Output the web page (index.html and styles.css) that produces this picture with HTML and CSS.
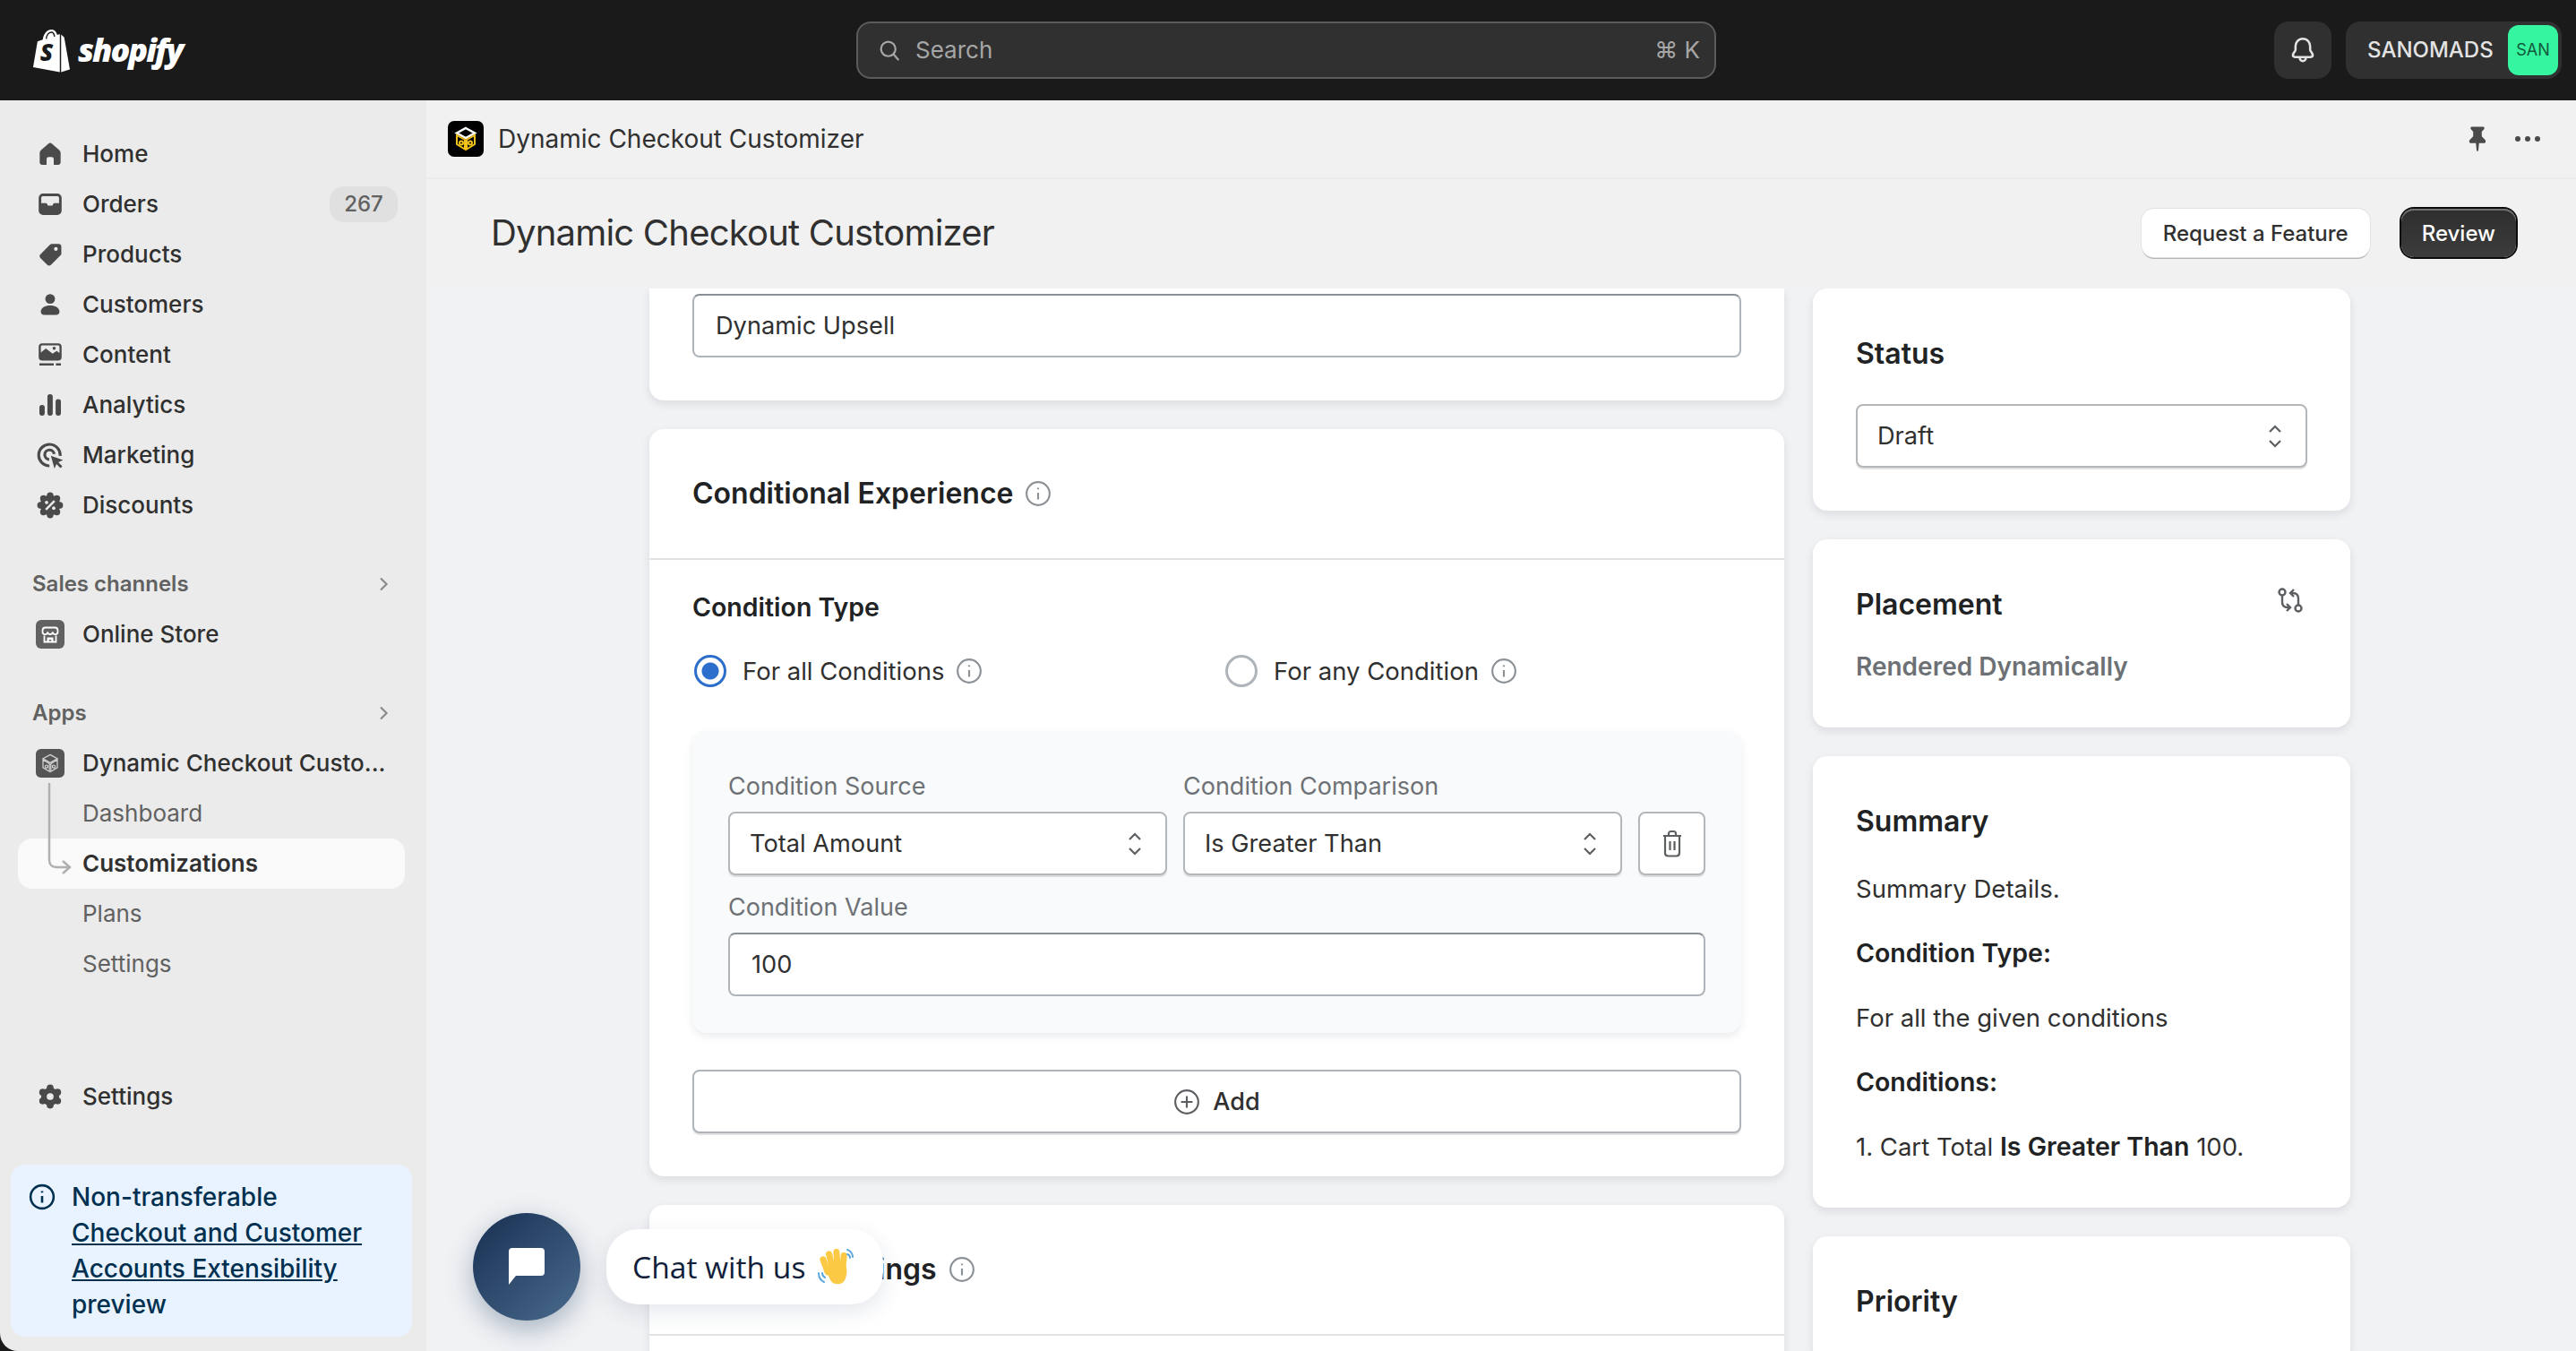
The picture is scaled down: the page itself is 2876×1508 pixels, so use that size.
FILE: index.html
```html
<!DOCTYPE html>
<html>
<head>
    <meta charset="utf-8">
    <title>Dynamic Checkout Customizer</title>
    <link rel="stylesheet" href="styles.css">
</head>
<body>
<header class="topbar">
    <div class="brand">
        <svg class="brand-bag" viewBox="0 0 44 50">
            <path fill="#fff" d="M1 44 6 14.500 12 12.500C13 5.500 17 1 22 1 25.500 1 27.500 3.500 28.500 7L31.500 6V49.500Z"/>
            <path fill="#fff" d="M33 6.500 36.500 10 43 46.500 33 49.500Z"/>
            <path fill="none" stroke="#1a1a1a" stroke-width="1.500" d="M16 11.500C16.500 7 19 4 22 4 24 4 25 6 25.500 9"/>
            <text class="brand-s" x="9" y="37">S</text>
        </svg>
        <span class="brand-name">shopify</span>
    </div>
    <div class="search">
        <svg class="icon-search" viewBox="0 0 20 20"><circle cx="9" cy="9" r="6.200"/><path d="m13.500 13.500 4 4.500"/></svg>
        <span class="search-text">Search</span>
        <span class="search-key">⌘ K</span>
    </div>
    <div class="top-actions">
        <div class="bell-btn">
            <svg class="icon-bell" viewBox="0 0 20 20"><path d="M10 2.500c-3 0-4.800 2.300-4.800 5v2.200c0 1-1.700 2.200-1.700 3.600 0 .8.600 1.200 1.400 1.200h10.200c.8 0 1.400-.4 1.400-1.200 0-1.400-1.700-2.600-1.700-3.600V7.500c0-2.700-1.800-5-4.800-5Z"/><path d="M8 15c0 1.300.9 2.200 2 2.200s2-.9 2-2.200"/></svg>
        </div>
        <div class="account">
            <span class="account-name">SANOMADS</span>
            <span class="account-avatar">SAN</span>
        </div>
    </div>
</header>

<div class="shell">
    <aside class="sidebar">
        <nav class="nav-group">
            <a class="nav-item">
                <svg class="nav-icon" viewBox="0 0 20 20"><path d="M8.700 2.800a2 2 0 0 1 2.600 0l5.200 4.600a2.500 2.500 0 0 1 .8 1.900v6.200a2 2 0 0 1-2 2h-2.800v-4a1.500 1.500 0 0 0-1.500-1.500h-2a1.500 1.500 0 0 0-1.500 1.500v4H4.700a2 2 0 0 1-2-2V9.300a2.500 2.500 0 0 1 .8-1.900Z"/></svg>
                Home
            </a>
            <a class="nav-item">
                <svg class="nav-icon" viewBox="0 0 20 20"><path fill-rule="evenodd" d="M5 2.500h10a3 3 0 0 1 3 3v9a3 3 0 0 1-3 3H5a3 3 0 0 1-3-3v-9a3 3 0 0 1 3-3ZM3.800 5.500c0-.6.500-1.100 1.100-1.100h10.200c.6 0 1.100.5 1.100 1.100v3.700h-3.100c-.5 0-.9.300-1.100.8l-.4 1h-3.200l-.4-1c-.2-.5-.6-.8-1.100-.8H3.800Z"/></svg>
                Orders
                <span class="nav-badge">267</span>
            </a>
            <a class="nav-item">
                <svg class="nav-icon" viewBox="0 0 20 20"><path fill-rule="evenodd" d="M11.200 2.700h4.600a2 2 0 0 1 2 2v4.600a2 2 0 0 1-.6 1.400l-6.500 6.500a2 2 0 0 1-2.800 0l-4.600-4.600a2 2 0 0 1 0-2.800l6.500-6.500a2 2 0 0 1 1.400-.6Zm2.800 4.800a1.300 1.300 0 1 0 0-2.600 1.300 1.300 0 0 0 0 2.600Z"/></svg>
                Products
            </a>
            <a class="nav-item">
                <svg class="nav-icon" viewBox="0 0 20 20"><circle cx="10" cy="6" r="3.400"/><path d="M3.500 15c0-2.800 3-4.300 6.500-4.300s6.500 1.500 6.500 4.300c0 1.300-1 2.200-2.200 2.200H5.700c-1.200 0-2.200-.9-2.200-2.200Z"/></svg>
                Customers
            </a>
            <a class="nav-item">
                <svg class="nav-icon" viewBox="0 0 20 20"><path fill-rule="evenodd" d="M4.500 2h11A2.500 2.500 0 0 1 18 4.500v7a2.500 2.500 0 0 1-2.500 2.500h-11A2.500 2.500 0 0 1 2 11.500v-7A2.500 2.500 0 0 1 4.500 2Zm-1 6.500V4.500c0-.6.400-1 1-1h11c.6 0 1 .4 1 1v4.300l-2-1.500-2.800 1.900L7 5.700Z"/><circle cx="12.800" cy="5.500" r="1.100"/><path d="M2.500 16h10v1.500h-10zM14 16h3.500v1.500H14z"/></svg>
                Content
            </a>
            <a class="nav-item">
                <svg class="nav-icon" viewBox="0 0 20 20"><rect x="2.500" y="10" width="3.700" height="7.500" rx="1.800"/><rect x="8.100" y="2.500" width="3.700" height="15" rx="1.800"/><rect x="13.800" y="6" width="3.700" height="11.500" rx="1.800"/></svg>
                Analytics
            </a>
            <a class="nav-item">
                <svg class="nav-icon" viewBox="0 0 20 20"><path class="nav-stroke" d="M17 10.500A7.500 7.500 0 1 0 9.500 17.500"/><path class="nav-stroke" d="M12.800 9.200A3.300 3.300 0 1 0 9.300 13"/><path d="m10.500 10.500 8.500 3-3.300 1.500 2.800 2.800-1.300 1.300-2.800-2.800-1.400 3Z"/></svg>
                Marketing
            </a>
            <a class="nav-item">
                <svg class="nav-icon" viewBox="0 0 20 20">
                    <circle cx="10" cy="10" r="7"/><circle cx="10" cy="3.300" r="2.300"/><circle cx="10" cy="16.700" r="2.300"/><circle cx="3.300" cy="10" r="2.300"/><circle cx="16.700" cy="10" r="2.300"/><circle cx="5.300" cy="5.300" r="2.300"/><circle cx="14.700" cy="5.300" r="2.300"/><circle cx="5.300" cy="14.700" r="2.300"/><circle cx="14.700" cy="14.700" r="2.300"/>
                    <path class="nav-cut" d="m7 13 6-6"/><circle class="nav-dot" cx="7.500" cy="8" r="1.200"/><circle class="nav-dot" cx="12.500" cy="12" r="1.200"/>
                </svg>
                Discounts
            </a>
        </nav>

        <nav class="nav-group">
            <div class="nav-head">Sales channels
                <svg class="nav-chevron" viewBox="0 0 20 20"><path d="m7.500 4.500 5.500 5.500-5.500 5.500"/></svg>
            </div>
            <a class="nav-item">
                <svg class="nav-icon" viewBox="0 0 32 32"><rect width="32" height="32" rx="6" fill="#616161"/><path class="store-line" d="M7.500 12c0-2 1.200-3.500 3-3.500h11c1.800 0 3 1.500 3 3.500v1.200a2.800 2.800 0 0 1-5.700 0 2.800 2.800 0 0 1-5.600 0 2.800 2.800 0 0 1-5.700 0ZM9.500 17.500v7h13v-7"/><path fill="#fff" d="M12.500 25v-5.500h7V25h-2.300v-3h-2.400v3Z"/></svg>
                Online Store
            </a>
        </nav>

        <nav class="nav-group">
            <div class="nav-head">Apps
                <svg class="nav-chevron" viewBox="0 0 20 20"><path d="m7.500 4.500 5.500 5.500-5.500 5.500"/></svg>
            </div>
            <a class="nav-item">
                <svg class="nav-icon" viewBox="0 0 40 40">
                    <rect width="40" height="40" rx="7" fill="#555"/>
                    <g fill="none" stroke="#d8d8d8" stroke-width="1.500"><path d="m20 8 10 5.500L20 19l-10-5.500Z"/><path d="M10 15v11l9 5.500V20.500ZM30 15v11l-9 5.500V20.500Z"/><circle cx="15" cy="24.500" r="2"/><circle cx="25" cy="24.500" r="2"/></g>
                </svg>
                <span class="nav-clip">Dynamic Checkout Custo...</span>
            </a>
            <div class="sub-list">
                <svg class="tree-line" viewBox="0 0 30 100"><path d="M3 0v86c0 5 3 8 8 8h15M18 87l8 7-8 7"/></svg>
                <a class="nav-item sub">Dashboard</a>
                <a class="nav-item sub active">Customizations</a>
                <a class="nav-item sub">Plans</a>
                <a class="nav-item sub">Settings</a>
            </div>
        </nav>

        <div class="sidebar-foot">
            <a class="nav-item">
                <svg class="nav-icon" viewBox="0 0 20 20">
                    <circle cx="10" cy="10" r="6.300"/><circle cx="10" cy="4" r="2.400"/><circle cx="10" cy="16" r="2.400"/><circle cx="4.800" cy="7" r="2.400"/><circle cx="15.200" cy="7" r="2.400"/><circle cx="4.800" cy="13" r="2.400"/><circle cx="15.200" cy="13" r="2.400"/>
                    <circle class="nav-dot" cx="10" cy="10" r="2.400"/>
                </svg>
                Settings
            </a>
            <div class="banner">
                <svg class="banner-icon" viewBox="0 0 28 28"><circle cx="14" cy="14" r="12"/><path d="M14 13v7M14 8v1.500"/></svg>
                <div class="banner-text">Non-transferable <a class="banner-link">Checkout and Customer Accounts Extensibility</a> preview</div>
            </div>
        </div>
    </aside>

    <main class="main">
        <div class="app-bar">
            <svg class="app-icon" viewBox="0 0 40 40">
                <rect width="40" height="40" rx="7" fill="#000"/>
                <path d="m20 8 10 5.500L20 19l-10-5.500Z" fill="#000" stroke="#fff" stroke-width="2.500"/>
                <g fill="none" stroke="#f2c21b" stroke-width="2"><path d="M10 16v10l9 5.500V21ZM30 16v10l-9 5.500V21Z"/><circle cx="15" cy="24.500" r="2"/><circle cx="25" cy="24.500" r="2"/></g>
            </svg>
            <span class="app-name">Dynamic Checkout Customizer</span>
            <div class="app-tools">
                <svg class="icon-pin" viewBox="0 0 20 20"><path d="M6 1.500h8c.8 0 1.200 1.400.4 2L13 5v3.300l2.300 2.300c.8.800.4 2.400-.8 2.400H11.100l-.5 5.200c-.1.500-1 .5-1.200 0L8.900 13H5.500c-1.200 0-1.600-1.600-.8-2.400L7 8.300V5L5.600 3.500c-.8-.6-.4-2 .4-2Z"/></svg>
                <svg class="icon-dots" viewBox="0 0 28 6"><circle cx="3" cy="3" r="3"/><circle cx="14" cy="3" r="3"/><circle cx="25" cy="3" r="3"/></svg>
            </div>
        </div>

        <div class="page-head">
            <h1 class="page-title">Dynamic Checkout Customizer</h1>
            <div class="page-actions">
                <button class="btn">Request a Feature</button>
                <button class="btn btn-dark">Review</button>
            </div>
        </div>

        <div class="scroller">
            <div class="col-left">
                <section class="card card-cut">
                    <div class="field">Dynamic Upsell</div>
                </section>

                <section class="card">
                    <div class="card-head">
                        <h2 class="card-title">Conditional Experience</h2>
                        <svg class="info" viewBox="0 0 28 28"><circle cx="14" cy="14" r="12"/><path d="M14 13v7M14 8v1.500"/></svg>
                    </div>
                    <div class="card-body">
                        <h3 class="sub-title">Condition Type</h3>
                        <div class="radio-row">
                            <label class="radio-opt">
                                <span class="radio on"></span>For all Conditions
                                <svg class="info" viewBox="0 0 28 28"><circle cx="14" cy="14" r="12"/><path d="M14 13v7M14 8v1.500"/></svg>
                            </label>
                            <label class="radio-opt">
                                <span class="radio"></span>For any Condition
                                <svg class="info" viewBox="0 0 28 28"><circle cx="14" cy="14" r="12"/><path d="M14 13v7M14 8v1.500"/></svg>
                            </label>
                        </div>
                        <div class="rule">
                            <div class="rule-row">
                                <div class="rule-col">
                                    <div class="field-label">Condition Source</div>
                                    <div class="field select">Total Amount
                                        <svg class="updown" viewBox="0 0 20 28"><path d="m4 9 6-6 6 6M4 19l6 6 6-6"/></svg>
                                    </div>
                                </div>
                                <div class="rule-col">
                                    <div class="field-label">Condition Comparison</div>
                                    <div class="field select">Is Greater Than
                                        <svg class="updown" viewBox="0 0 20 28"><path d="m4 9 6-6 6 6M4 19l6 6 6-6"/></svg>
                                    </div>
                                </div>
                                <button class="trash-btn">
                                    <svg class="icon-trash" viewBox="0 0 24 32"><path d="M2 7h20M8 7V4.500C8 3 9 2 10.500 2h3C15 2 16 3 16 4.500V7M4 7v19c0 2 1.500 3.500 3.500 3.500h9c2 0 3.500-1.500 3.500-3.500V7M9.500 13v10M14.500 13v10"/></svg>
                                </button>
                            </div>
                            <div class="field-label">Condition Value</div>
                            <div class="field">100</div>
                        </div>
                        <button class="add-btn">
                            <svg class="icon-add" viewBox="0 0 28 28"><circle cx="14" cy="14" r="12"/><path d="M14 8v12M8 14h12"/></svg>
                            Add
                        </button>
                    </div>
                </section>

                <section class="card">
                    <div class="card-head">
                        <h2 class="card-title">Discount Settings</h2>
                        <svg class="info" viewBox="0 0 28 28"><circle cx="14" cy="14" r="12"/><path d="M14 13v7M14 8v1.500"/></svg>
                    </div>
                    <div class="card-body"></div>
                </section>
            </div>

            <div class="col-right">
                <section class="card card-side">
                    <h2 class="card-title">Status</h2>
                    <div class="field select field-status">Draft
                        <svg class="updown" viewBox="0 0 20 28"><path d="m4 9 6-6 6 6M4 19l6 6 6-6"/></svg>
                    </div>
                </section>
                <section class="card card-side">
                    <div class="side-head">
                        <h2 class="card-title">Placement</h2>
                        <svg class="icon-swap" viewBox="0 0 30 30"><circle cx="6" cy="6" r="3.500"/><circle cx="24" cy="24" r="3.500"/><path d="M6 10v7c0 4 2 6 6 6h3M11 19l4 4-4 4M24 20v-7c0-4-2-6-6-6h-3M19 11l-4-4 4-4"/></svg>
                    </div>
                    <p class="muted">Rendered Dynamically</p>
                </section>
                <section class="card card-side">
                    <h2 class="card-title">Summary</h2>
                    <p class="summary-line first">Summary Details.</p>
                    <p class="summary-line"><b>Condition Type:</b></p>
                    <p class="summary-line">For all the given conditions</p>
                    <p class="summary-line"><b>Conditions:</b></p>
                    <p class="summary-line">1. Cart Total <b>Is Greater Than</b> 100.</p>
                </section>
                <section class="card card-side">
                    <h2 class="card-title">Priority</h2>
                </section>
            </div>
        </div>
    </main>
</div>

<div class="chat">
    <button class="chat-btn">
        <svg class="icon-chat" viewBox="0 0 40 42"><path d="M4 0h32a4 4 0 0 1 4 4v23a4 4 0 0 1-4 4H8l-8 10V4a4 4 0 0 1 4-4Z"/></svg>
    </button>
    <div class="chat-pill">
        Chat with us
        <svg class="icon-wave" viewBox="0 0 40 40">
            <g fill="#fbc943">
                <rect x="5" y="8" width="7" height="22" rx="3.500" transform="rotate(-20 8 19)"/>
                <rect x="11" y="2" width="7" height="24" rx="3.500" transform="rotate(-13 15 14)"/>
                <rect x="18" y="0" width="7" height="26" rx="3.500" transform="rotate(-4 21 13)"/>
                <rect x="25" y="4" width="7" height="24" rx="3.500" transform="rotate(5 28 15)"/>
                <path d="M9 22c1-4 22-6 23-1 1 5 0 10-2 14-2 5-12 6-15 1-2-3-5-10-6-14Z"/>
            </g>
            <g fill="none" stroke="#5ba7dc" stroke-width="2" stroke-linecap="round"><path d="M33 1c3 1 6 4 6 8M33 6c2 .5 3 2 3 4"/><path d="M1 27c0 4 2 8 6 10M5 27c0 2 1 4 3 5"/></g>
        </svg>
    </div>
</div>
</body>
</html>
```

FILE: styles.css
```css
html, body {
    height: 100%;
    margin: 0;
    padding: 0;
}

body {
    width: 2876px;
    height: 1508px;
    overflow: hidden;
    position: relative;
    background: #1a1a1a;
    color: #303030;
    font: 27.5px/40px Inter, "Liberation Sans", sans-serif;
}

h1, h2, h3, p {
    margin: 0;
    padding: 0;
    font-size: 27.5px;
}

button {
    font-family: inherit;
    cursor: pointer;
}

/* top bar */
.topbar {
    display: flex;
    align-items: center;
    justify-content: space-between;
    height: 112px;
    padding: 0 16px 0 36px;
    box-sizing: border-box;
    background: #1a1a1a;
}

.brand {
    display: flex;
    align-items: center;
    gap: 8px;
    width: 920px;
}

.brand-bag {
    width: 43px;
    height: 49px;
}

.brand-s {
    font: italic 800 27px "Open Sans", sans-serif;
    fill: #1a1a1a;
}

.brand-name {
    color: #fff;
    font: italic 800 36px/44px "Open Sans", sans-serif;
    letter-spacing: -2px;
}

.search {
    display: flex;
    align-items: center;
    width: 960px;
    height: 64px;
    padding: 0 16px 0 22px;
    box-sizing: border-box;
    background: #303030;
    border: 2px solid #5b5b5b;
    border-radius: 16px;
    color: #a6a6a6;
    font-size: 26px;
}

.icon-search {
    width: 26px;
    height: 26px;
    margin-right: 16px;
    fill: none;
    stroke: #a6a6a6;
    stroke-width: 1.700;
    stroke-linecap: round;
}

.search-key {
    margin-left: auto;
}

.top-actions {
    display: flex;
    align-items: center;
    gap: 16px;
    margin-left: auto;
}

.bell-btn {
    display: flex;
    align-items: center;
    justify-content: center;
    width: 64px;
    height: 64px;
    border-radius: 16px;
    background: #303030;
}

.icon-bell {
    width: 34px;
    height: 34px;
    fill: none;
    stroke: #e3e3e3;
    stroke-width: 1.500;
}

.account {
    display: flex;
    align-items: center;
    justify-content: space-between;
    width: 241px;
    height: 64px;
    padding: 0 4px 0 24px;
    box-sizing: border-box;
    border-radius: 16px;
    background: #303030;
    color: #e3e3e3;
    font-size: 24px;
    font-weight: 500;
}

.account-avatar {
    display: flex;
    align-items: center;
    justify-content: center;
    width: 56px;
    height: 56px;
    border-radius: 12px;
    background: #36f5a0;
    color: #10593a;
    font-size: 18px;
    font-weight: 400;
}

/* layout */
.shell {
    display: flex;
    height: 1396px;
}

.sidebar {
    display: flex;
    flex-direction: column;
    gap: 32px;
    flex: none;
    width: 476px;
    padding: 32px 0 16px;
    box-sizing: border-box;
    background: #ebebeb;
    border-bottom-left-radius: 20px;
    font-size: 26px;
}

.nav-item {
    display: flex;
    align-items: center;
    gap: 20px;
    height: 56px;
    margin: 0 24px 0 20px;
    padding: 0 8px 0 20px;
    border-radius: 16px;
    color: #303030;
    font-weight: 500;
}

.nav-icon {
    flex: none;
    width: 32px;
    height: 32px;
    fill: #4a4a4a;
}

.nav-stroke {
    fill: none;
    stroke: #4a4a4a;
    stroke-width: 2;
}

.nav-cut {
    fill: none;
    stroke: #ebebeb;
    stroke-width: 1.600;
}

.nav-dot {
    fill: #ebebeb;
}

.store-line {
    fill: none;
    stroke: #fff;
    stroke-width: 1.800;
}

.nav-badge {
    display: block;
    width: 76px;
    height: 40px;
    margin-left: auto;
    border-radius: 16px;
    background: #e0e0e0;
    color: #616161;
    font-size: 24px;
    line-height: 40px;
    text-align: center;
}

.nav-head {
    display: flex;
    align-items: center;
    justify-content: space-between;
    height: 56px;
    padding: 0 36px 0 36px;
    color: #616161;
    font-size: 24px;
    font-weight: 600;
}

.nav-chevron {
    width: 24px;
    height: 24px;
    fill: none;
    stroke: #8a8a8a;
    stroke-width: 1.800;
}

.nav-clip {
    white-space: nowrap;
    margin-right: -12px;
}

.sub-list {
    position: relative;
}

.nav-item.sub {
    padding-left: 72px;
    color: #616161;
    font-weight: 400;
}

.nav-item.active {
    background: #fafafa;
    color: #303030;
    font-weight: 600;
}

.tree-line {
    position: absolute;
    top: -8px;
    left: 52px;
    z-index: 1;
    width: 30px;
    height: 104px;
    fill: none;
    stroke: #b0b0b0;
    stroke-width: 2.500;
}

.sidebar-foot {
    display: flex;
    flex-direction: column;
    gap: 48px;
    margin-top: auto;
}

.banner {
    display: flex;
    gap: 18px;
    width: 448px;
    height: 192px;
    margin-left: 12px;
    padding: 16px 20px 0 20px;
    box-sizing: border-box;
    border-radius: 16px;
    background: #e8f3ff;
    color: #00304f;
    font-size: 28px;
    font-weight: 500;
}

.banner-icon {
    flex: none;
    width: 30px;
    height: 30px;
    margin-top: 5px;
    fill: none;
    stroke: #00304f;
    stroke-width: 2.400;
}

.banner-link {
    display: block;
    text-decoration: underline;
}

/* main */
.main {
    flex: 1;
    display: flex;
    flex-direction: column;
    background: #f1f2f4;
}

.app-bar {
    display: flex;
    align-items: center;
    gap: 16px;
    height: 86px;
    padding: 0 40px 0 24px;
    background: #f1f1f1;
    border-bottom: 2px solid #ebebeb;
}

.app-icon {
    width: 40px;
    height: 40px;
}

.app-name {
    font-size: 28px;
}

.app-tools {
    display: flex;
    align-items: center;
    gap: 26px;
    margin-left: auto;
}

.icon-pin {
    width: 32px;
    height: 32px;
    fill: #4a4a4a;
}

.icon-dots {
    width: 28px;
    height: 6px;
    fill: #4a4a4a;
}

.page-head {
    display: flex;
    align-items: center;
    justify-content: space-between;
    height: 122px;
    padding: 0 67px 2px 72px;
    box-sizing: border-box;
    background: #f1f1f1;
}

.page-title {
    font-size: 40px;
    font-weight: 400;
    line-height: 52px;
    letter-spacing: -.8px;
}

.page-actions {
    display: flex;
    align-items: center;
    gap: 35px;
}

.btn {
    height: 54px;
    padding: 0 24px;
    border: 0;
    border-radius: 14px;
    background: #fff;
    box-shadow: 0 0 0 1px #e3e3e3, 0 2px 0 #b5b5b5;
    color: #303030;
    font-size: 24px;
    font-weight: 500;
}

.btn-dark {
    height: 54px;
    padding: 0 23px;
    background: linear-gradient(#2e2e2e, #3c3c3c);
    box-shadow: 0 0 0 2px #0c0c0c, inset 0 2px 0 #707070;
    color: #fff;
}

.scroller {
    display: flex;
    gap: 32px;
    flex: 1;
    overflow: hidden;
    padding-left: 249px;
}

.col-left, .col-right {
    display: flex;
    flex-direction: column;
    gap: 32px;
    flex: none;
}

.col-left {
    width: 1267px;
}

.col-right {
    width: 600px;
}

.card {
    flex: none;
    background: #fff;
    border-radius: 16px;
    box-shadow: 0 4px 10px rgba(60, 66, 87, .12);
}

.card-cut {
    padding: 6px 48px 48px;
    border-radius: 0 0 16px 16px;
}

.card-head {
    display: flex;
    align-items: center;
    gap: 13px;
    height: 146px;
    padding: 0 48px;
    box-sizing: border-box;
    border-bottom: 2px solid #e1e3e5;
}

.card-title {
    color: #202223;
    font-size: 32px;
    font-weight: 600;
}

.info {
    flex: none;
    width: 30px;
    height: 30px;
    fill: none;
    stroke: #8c9196;
    stroke-width: 2;
}

.card-body {
    padding: 33px 48px 48px;
}

.sub-title {
    color: #202223;
    font-size: 28.5px;
    font-weight: 600;
    line-height: 40px;
}

.radio-row {
    display: grid;
    grid-template-columns: 593px 1fr;
    margin-top: 31px;
}

.radio-opt {
    display: flex;
    align-items: center;
    gap: 18px;
    height: 40px;
    color: #303030;
}

.radio-opt .info {
    margin-left: -5px;
}

.radio {
    flex: none;
    width: 36px;
    height: 36px;
    margin-left: 2px;
    box-sizing: border-box;
    border: 3px solid #aeb4b9;
    border-radius: 50%;
    background: #fff;
}

.radio.on {
    border-color: #2c6ecb;
    background: radial-gradient(circle, #2c6ecb 0 9px, #fff 10px);
}

.rule {
    margin-top: 47px;
    padding: 42px 40px 41px;
    background: #f9fafb;
    border-radius: 16px;
    box-shadow: 0 4px 8px rgba(60, 66, 87, .1);
}

.rule-row {
    display: flex;
    align-items: flex-end;
    gap: 18px;
}

.rule-col {
    flex: 1;
}

.field-label {
    height: 40px;
    margin-bottom: 8px;
    color: #6d7175;
    font-size: 27px;
    line-height: 40px;
}

.rule-row + .field-label {
    margin-top: 16px;
}

.field {
    display: flex;
    align-items: center;
    justify-content: space-between;
    height: 71px;
    padding: 0 24px;
    box-sizing: border-box;
    background: #fff;
    border: 2px solid #aeb4b9;
    border-top-color: #898f94;
    border-radius: 8px;
    color: #303030;
    font-size: 27.2px;
}

.select {
    padding-left: 22px;
    border-color: #b4b7ba;
    box-shadow: 0 2px 1px rgba(0, 0, 0, .12);
}

.field-status {
    margin-top: 36px;
}

.updown {
    width: 20px;
    height: 28px;
    fill: none;
    stroke: #5c5f62;
    stroke-width: 2.200;
}

.trash-btn {
    display: flex;
    align-items: center;
    justify-content: center;
    flex: none;
    width: 75px;
    height: 71px;
    padding: 0;
    background: #fff;
    border: 2px solid #b4b7ba;
    border-radius: 8px;
    box-shadow: 0 2px 1px rgba(0, 0, 0, .12);
}

.icon-trash {
    width: 24px;
    height: 32px;
    fill: none;
    stroke: #5c5f62;
    stroke-width: 2.200;
}

.add-btn {
    display: flex;
    align-items: center;
    justify-content: center;
    gap: 14px;
    width: 100%;
    height: 71px;
    margin-top: 41px;
    background: #fff;
    border: 2px solid #aeb4b9;
    border-radius: 8px;
    box-shadow: 0 2px 1px rgba(0, 0, 0, .12);
    color: #303030;
    font-size: 27px;
    font-weight: 500;
}

.icon-add {
    width: 30px;
    height: 30px;
    fill: none;
    stroke: #5c5f62;
    stroke-width: 2;
}

.card-side {
    padding: 53px 48px 48px;
}

.side-head {
    display: flex;
    align-items: flex-start;
    justify-content: space-between;
}

.icon-swap {
    width: 30px;
    height: 30px;
    margin-right: 4px;
    fill: none;
    stroke: #5c5f62;
    stroke-width: 2.400;
}

.muted {
    margin-top: 29px;
    color: #6d7175;
    font-size: 28px;
    font-weight: 600;
}

.summary-line {
    margin-top: 32px;
    color: #303030;
}

.summary-line.first {
    margin-top: 35px;
}

.summary-line b {
    color: #202223;
    font-size: 28.5px;
    font-weight: 600;
    line-height: 1;
}

/* chat widget sits over the page */
.chat {
    position: absolute;
    left: 528px;
    top: 1354px;
    display: flex;
    align-items: center;
    gap: 29px;
}

.chat-btn {
    display: flex;
    align-items: center;
    justify-content: center;
    width: 120px;
    height: 120px;
    padding: 0;
    border: 0;
    border-radius: 50%;
    background: linear-gradient(135deg, #172f52, #4a6b8d);
    box-shadow: 0 10px 30px rgba(30, 60, 100, .35);
}

.icon-chat {
    width: 40px;
    height: 42px;
    fill: #fff;
}

.chat-pill {
    display: flex;
    align-items: center;
    gap: 14px;
    height: 84px;
    padding: 0 33px 0 29px;
    border-radius: 36px;
    background: #fff;
    box-shadow: 0 8px 24px rgba(30, 60, 100, .12);
    color: #10203a;
    font: 400 33.6px/40px "Open Sans", sans-serif;
}

.icon-wave {
    width: 40px;
    height: 40px;
}
```
